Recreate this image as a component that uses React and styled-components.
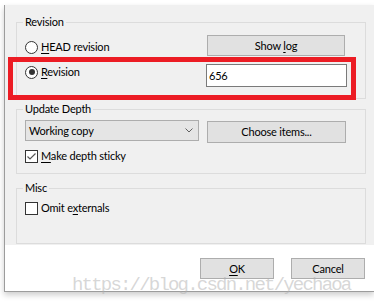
import React from "react";
import styled, { createGlobalStyle } from "styled-components";

const GlobalStyle = createGlobalStyle`
  html, body { margin: 0; padding: 0; background: #ffffff; }
  body {
    font-family: Lato, "Noto Sans", sans-serif;
    font-size: 11px;
    letter-spacing: -0.2px;
    color: #000000;
  }
  * { box-sizing: border-box; }
`;

const Stage = styled.div`
  position: relative;
  width: 374px;
  height: 305px;
  overflow: hidden;
  background: #ffffff;
  padding: 5px 0 0 4px;
`;

const Window = styled.div`
  width: 370px;
  border-left: 1px solid #9c9c9c;
  border-bottom: 1px solid #9c9c9c;
  box-shadow: 0 3px 6px rgba(0, 0, 0, 0.2);
  display: flex;
  flex-direction: column;
`;

const Panel = styled.div`
  background: #f0f0f0;
  height: 240px;
  padding: 17px 8px 0 11px;
  display: flex;
  flex-direction: column;
`;

const Group = styled.div`
  position: relative;
  border: 1px solid #dcdcdc;
  margin-top: ${(p) => p.$gap || 0}px;
  padding: ${(p) => p.$pad};
  display: flex;
  flex-direction: column;
  gap: ${(p) => p.$rowGap || 0}px;
`;

const Legend = styled.span`
  position: absolute;
  top: -8px;
  left: 6px;
  padding: 0 2px;
  line-height: 14px;
  background: #f0f0f0;
  white-space: nowrap;
`;

const Row = styled.div`
  display: flex;
  align-items: flex-start;
  padding-left: 8px;
`;

const LeftCell = styled.div`
  width: 182px;
  flex: none;
  margin-top: ${(p) => p.$offset || 0}px;
  display: flex;
  align-items: center;
`;

const Choice = styled.label`
  display: flex;
  align-items: center;
  gap: 3px;
  line-height: 14px;
  white-space: nowrap;
`;

const RadioCircle = styled.span`
  width: 13px;
  height: 13px;
  border-radius: 50%;
  border: 1px solid #333333;
  background: #ffffff;
  display: flex;
  align-items: center;
  justify-content: center;
  flex: none;
  &::after {
    content: "";
    width: 6px;
    height: 6px;
    border-radius: 50%;
    background: ${(p) => (p.$checked ? "#333333" : "transparent")};
  }
`;

const CheckSquare = styled.span`
  width: 13px;
  height: 13px;
  border: 1px solid #333333;
  background: #ffffff;
  flex: none;
  display: flex;
  align-items: center;
  justify-content: center;
`;

const Mn = styled.span`
  text-decoration: underline;
  text-underline-offset: 2px;
`;

const Button = styled.div`
  width: ${(p) => p.$w}px;
  height: ${(p) => p.$h || 21}px;
  margin-top: ${(p) => p.$mt || 0}px;
  border: 1px solid #adadad;
  background: #e1e1e1;
  display: flex;
  align-items: center;
  justify-content: center;
  line-height: 14px;
  white-space: nowrap;
  flex: none;
`;

const TextInput = styled.div`
  width: 141px;
  height: 23px;
  margin-left: -1px;
  border: 1px solid #7a7a7a;
  background: #ffffff;
  display: flex;
  align-items: center;
  padding-left: 2px;
  line-height: 14px;
`;

const Combo = styled.div`
  width: 174px;
  height: 21px;
  border: 1px solid #adadad;
  background: #e5e5e5;
  display: flex;
  align-items: center;
  justify-content: space-between;
  padding: 0 5px 0 3px;
  line-height: 14px;
`;

const Footer = styled.div`
  height: 46px;
  background: #ffffff;
  display: flex;
  justify-content: flex-end;
  align-items: flex-start;
  gap: 17px;
  padding: 13px 9px 0 0;
`;

const Highlight = styled.div`
  position: absolute;
  left: 8px;
  top: 57px;
  width: 348px;
  height: 43px;
  border: 5px solid #ec1c24;
  pointer-events: none;
`;

const Watermark = styled.div`
  position: absolute;
  left: 72px;
  top: 276px;
  font-family: "Liberation Mono", "DejaVu Sans Mono", monospace;
  font-size: 19px;
  line-height: 19px;
  letter-spacing: -1.8px;
  color: rgba(175, 175, 175, 0.5);
  white-space: nowrap;
  pointer-events: none;
`;

const Radio = ({ checked, children }) => (
  <Choice>
    <RadioCircle $checked={checked} />
    <span>{children}</span>
  </Choice>
);

const Checkbox = ({ checked, children }) => (
  <Choice>
    <CheckSquare>
      {checked && (
        <svg width="11" height="11" viewBox="0 0 11 11">
          <polyline
            points="1.5,5.5 4,8 9.5,2.5"
            fill="none"
            stroke="#555555"
            strokeWidth="1.2"
          />
        </svg>
      )}
    </CheckSquare>
    <span>{children}</span>
  </Choice>
);

export default function App() {
  return (
    <>
      <GlobalStyle />
      <Stage>
        <Window>
          <Panel>
            <Group $pad="12px 0 11px 0" $rowGap={8}>
              <Legend>Revision</Legend>
              <Row>
                <LeftCell $offset={5}>
                  <Radio>
                    <Mn>H</Mn>EAD revision
                  </Radio>
                </LeftCell>
                <Button $w={138}>
                  <span>
                    Show <Mn>l</Mn>og
                  </span>
                </Button>
              </Row>
              <Row>
                <LeftCell $offset={1}>
                  <Radio checked>
                    <Mn>R</Mn>evision
                  </Radio>
                </LeftCell>
                <TextInput>656</TextInput>
              </Row>
            </Group>

            <Group $gap={10} $pad="10px 0 10px 0" $rowGap={6}>
              <Legend>Update Depth</Legend>
              <Row>
                <LeftCell>
                  <Combo>
                    <span>Working copy</span>
                    <svg width="8" height="5" viewBox="0 0 8 5">
                      <polyline
                        points="0.5,0.5 4,4 7.5,0.5"
                        fill="none"
                        stroke="#606060"
                        strokeWidth="1"
                      />
                    </svg>
                  </Combo>
                </LeftCell>
                <Button $w={139} $h={22} $mt={1}>
                  <span>Choose items...</span>
                </Button>
              </Row>
              <Row>
                <Checkbox checked>
                  <Mn>M</Mn>ake depth sticky
                </Checkbox>
              </Row>
            </Group>

            <Group $gap={14} $pad="12px 0 28px 0">
              <Legend>Misc</Legend>
              <Row>
                <Checkbox>
                  Omit e<Mn>x</Mn>ternals
                </Checkbox>
              </Row>
            </Group>
          </Panel>
          <Footer>
            <Button $w={74}>
              <span>
                <Mn>O</Mn>K
              </span>
            </Button>
            <Button $w={74}>
              <span>Cancel</span>
            </Button>
          </Footer>
        </Window>
        <Highlight />
        <Watermark>https://blog.csdn.net/yechaoa</Watermark>
      </Stage>
    </>
  );
}
